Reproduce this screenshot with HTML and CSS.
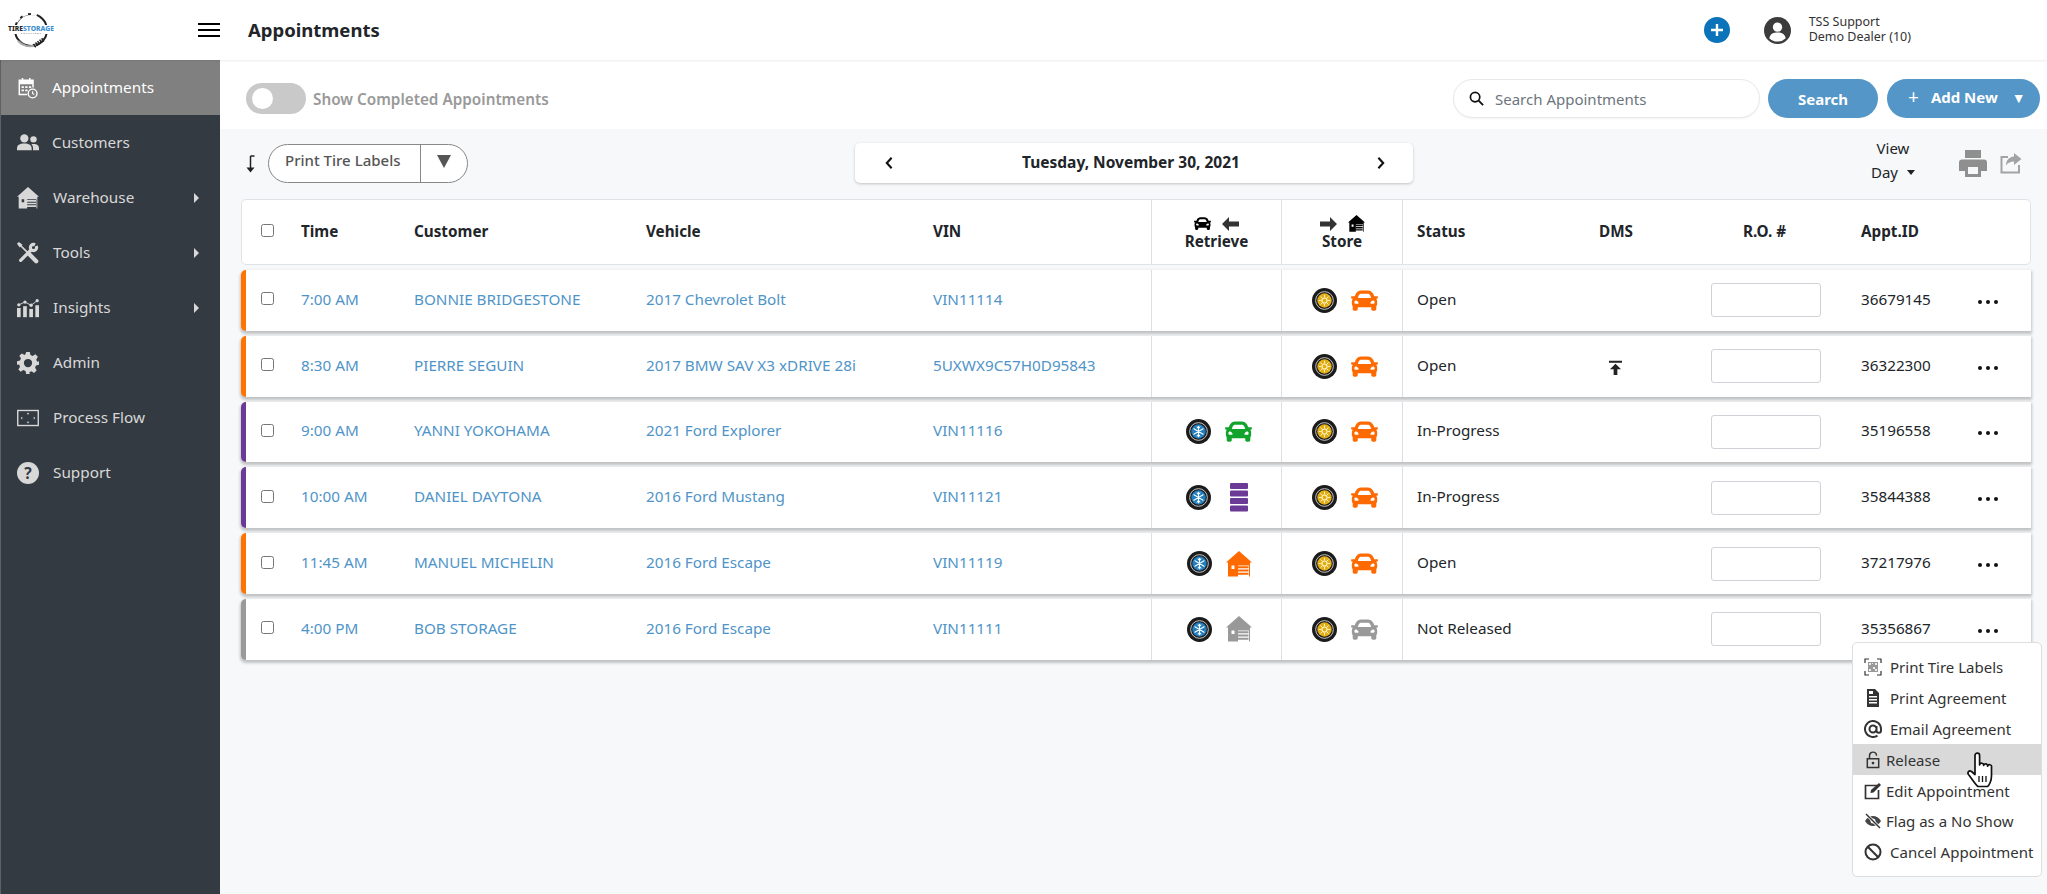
FILE: index.html
```html
<!DOCTYPE html>
<html lang="en">
<head>
<meta charset="utf-8">
<title>Appointments</title>
<link rel="stylesheet" href="styles.css">
</head>
<body>
<svg class="defs" width="0" height="0">
  <symbol id="car" viewBox="0 64 512 384"><path fill="currentColor" d="M499.99 176h-59.87l-16.64-41.6C406.38 91.63 365.57 64 319.5 64h-127c-46.06 0-86.88 27.63-103.99 70.4L71.87 176H12.01C4.2 176-1.53 183.34.37 190.91l6 24C7.7 220.25 12.5 224 18.01 224h20.07C24.65 235.73 16 252.78 16 272v48c0 16.12 6.16 30.67 16 41.93V416c0 17.67 14.33 32 32 32h32c17.67 0 32-14.33 32-32v-32h256v32c0 17.67 14.33 32 32 32h32c17.67 0 32-14.33 32-32v-54.07c9.84-11.25 16-25.8 16-41.93v-48c0-19.22-8.65-36.27-22.07-48H494c5.51 0 10.31-3.75 11.64-9.09l6-24c1.89-7.57-3.84-14.91-11.65-14.91zm-352.06-17.83c7.29-18.22 24.94-30.17 44.57-30.17h127c19.63 0 37.28 11.95 44.57 30.17L384 208H128l19.93-49.83zM96 319.8c-19.2 0-32-12.76-32-31.9S76.8 256 96 256s48 28.71 48 47.85-28.8 15.95-48 15.95zm320 0c-19.2 0-48 3.19-48-15.95S396.8 256 416 256s32 12.76 32 31.9-12.8 31.9-32 31.9z"/></symbol>
  <symbol id="house" viewBox="0 0 26 26"><path fill="currentColor" fill-rule="evenodd" d="M13 0 26 11.500H24V25.500H2V11.500H0ZM5.500 14.500v3.500h3v-3.500ZM12 14.500v11h11v-11Z"/><path fill="currentColor" d="M11.500 15.300h11v2h-11zM11.500 18.500h11v2h-11zM11.500 21.700h11v2h-11z"/></symbol>
  <symbol id="stack" viewBox="0 0 18 29"><g fill="currentColor"><rect y="0" width="18" height="6" rx="1"/><rect y="7.500" width="18" height="6" rx="1"/><rect y="15" width="18" height="6" rx="1"/><rect y="22.500" width="18" height="6" rx="1"/></g></symbol>
  <symbol id="tire-w" viewBox="0 0 26 26"><circle cx="13" cy="13" r="13" fill="#1b1b1b"/><circle cx="13" cy="13" r="9.200" fill="none" stroke="#ddd" stroke-width=".9"/><circle cx="13" cy="13" r="7.500" fill="#1f7fc0"/><path stroke="#fff" stroke-width="1.100" stroke-linecap="round" d="M13 7.500v11M8.200 10.200l9.600 5.600M8.200 15.800l9.600-5.600M11.500 8.300 13 9.800l1.500-1.500M11.500 17.700 13 16.200l1.500 1.500"/></symbol>
  <symbol id="tire-s" viewBox="0 0 26 26"><circle cx="13" cy="13" r="13" fill="#1b1b1b"/><circle cx="13" cy="13" r="9.200" fill="none" stroke="#ddd" stroke-width=".9"/><circle cx="13" cy="13" r="7.500" fill="#e2ac14"/><circle cx="13" cy="13" r="2.600" fill="none" stroke="#fff4c4" stroke-width="1.200"/><path stroke="#fff4c4" stroke-width="1" d="M13 7v2.800M13 16.200V19M7 13h2.800M16.200 13H19M8.800 8.800l2 2M15.200 15.200l2 2M17.200 8.800l-2 2M10.800 15.200l-2 2"/></symbol>
  <symbol id="lock-open" viewBox="0 0 16 20"><path fill="none" stroke="currentColor" stroke-width="1.700" d="M4 8V5a4 4 0 0 1 8 0M1.500 8.500h13v10h-13z"/><circle cx="8" cy="13.500" r="1.600" fill="currentColor"/></symbol>
</svg>

<div class="app">
  <header class="topbar">
    <div class="brand">
      <svg class="logo" viewBox="0 0 46 36" width="46" height="36">
        <circle cx="23" cy="18" r="16" fill="none" stroke="#222" stroke-width="2" />
        <path d="M8 10A16 16 0 0 1 30 3.500" fill="none" stroke="#fff" stroke-width="3" stroke-dasharray="6 3"/>
        <path d="M10 29A16 16 0 0 0 28 33" fill="none" stroke="#aaa" stroke-width="2"/>
        <path d="M26 34 36 27" fill="none" stroke="#222" stroke-width="4" stroke-dasharray="1.500 1"/>
        <rect x="0" y="13" width="46" height="9" fill="#fff"/>
        <text class="logo-a" x="0" y="18.500" textLength="46" lengthAdjust="spacingAndGlyphs">TIRE<tspan class="logo-b">STORAGE</tspan></text>
        <text class="logo-c" x="13" y="21.500" textLength="20">SOLUTIONS</text>
      </svg>
      <button class="burger" aria-label="Menu"><span></span><span></span><span></span></button>
    </div>
    <h1 class="page-title">Appointments</h1>
    <div class="top-right">
      <svg class="plus-round" viewBox="0 0 26 26" width="26" height="26"><circle cx="13" cy="13" r="13" fill="#0b73b9"/><path d="M13 7v12M7 13h12" stroke="#fff" stroke-width="2.400"/></svg>
      <svg class="avatar" viewBox="0 0 28 28" width="27" height="27"><circle cx="14" cy="14" r="14" fill="#3c3c3c"/><circle cx="14" cy="10.500" r="4.800" fill="#fff"/><path d="M5.500 22c1-5 4.500-6 8.500-6s7.500 1 8.500 6a12 12 0 0 1-17 0Z" fill="#fff"/></svg>
      <div class="user"><div>TSS Support</div><div>Demo Dealer (10)</div></div>
    </div>
  </header>

  <div class="body">
    <nav class="sidebar">
      <a class="nav-item tight active">
        <svg class="nav-icon" viewBox="0 0 22 24"><g fill="none" stroke="currentColor" stroke-width="1.600"><path d="M10 19H1.500V3.500h15v8"/><path d="M5 1v4M13 1v4"/></g><path fill="currentColor" d="M1.500 3.500h15V8h-15zM4 10h2.500v2H4zM8 10h2.500v2H8zM12 10h2.500v2H12zM4 13.500h2.500v2H4zM8 13.500h2.500v2H8z"/><circle cx="16" cy="18" r="4.800" fill="#808080" stroke="currentColor" stroke-width="1.500"/><path d="M16 15.500V18l1.800 1" fill="none" stroke="currentColor" stroke-width="1.200"/></svg>
        <span>Appointments</span>
      </a>
      <a class="nav-item tight">
        <svg class="nav-icon" viewBox="0 0 24 22"><g fill="currentColor"><circle cx="8" cy="6" r="4.500"/><circle cx="18" cy="7" r="3.500"/><path d="M0 19v-2c0-4 3-5.500 8-5.500s8 1.500 8 5.500v2ZM17.500 19v-2.500c0-1.500-.6-3-1.800-4.300 4.500-.8 8.300.4 8.300 4.300v2.500Z"/></g></svg>
        <span>Customers</span>
      </a>
      <a class="nav-item has-sub">
        <svg class="nav-icon" viewBox="0 0 26 26"><use href="#house"/></svg>
        <span>Warehouse</span><i class="caret"></i>
      </a>
      <a class="nav-item has-sub">
        <svg class="nav-icon" viewBox="0 0 24 24"><g fill="none" stroke="currentColor" stroke-linecap="round"><path stroke-width="1.800" d="M3 3l10 10"/><path stroke-width="4.600" d="M14 14l7 7"/><path stroke-width="3.600" d="M4 20 15 9"/><circle cx="18" cy="6" r="3.400" stroke-width="3.400"/></g><path class="jaw" d="M18.500 5.500 21 0h3v3Z"/><path fill="currentColor" d="M0 2 2 0l4 3-3 3Z"/></svg>
        <span>Tools</span><i class="caret"></i>
      </a>
      <a class="nav-item has-sub">
        <svg class="nav-icon" viewBox="0 0 24 22"><g fill="currentColor"><rect x="0" y="11" width="4" height="10"/><rect x="6.700" y="9" width="4" height="12"/><rect x="13.400" y="12" width="4" height="9"/><rect x="20" y="8" width="4" height="13"/><circle cx="2" cy="7.500" r="1.800"/><circle cx="8.700" cy="4.500" r="1.800"/><circle cx="15.400" cy="8" r="1.800"/><circle cx="22" cy="3" r="1.800"/></g><path d="M2 7.500 8.700 4.500l6.700 3.500L22 3" fill="none" stroke="currentColor"/></svg>
        <span>Insights</span><i class="caret"></i>
      </a>
      <a class="nav-item">
        <svg class="nav-icon" viewBox="0 0 24 24"><path fill="currentColor" fill-rule="evenodd" d="M10 0h4l.7 3.300 2.400 1 2.900-1.800 2.800 2.800-1.800 2.900 1 2.400L24 10v4l-3.300.7-1 2.400 1.800 2.900-2.800 2.800-2.900-1.800-2.400 1L14 24h-4l-.7-3.300-2.400-1L4 21.500 1.500 19l1.800-2.900-1-2.400L0 14v-4l3.300-.7 1-2.400L2.500 4 5.300 1.500l2.900 1.800 1.100-1ZM12 7.500a4.500 4.500 0 1 0 0 9 4.500 4.500 0 0 0 0-9Z"/></svg>
        <span>Admin</span>
      </a>
      <a class="nav-item">
        <svg class="nav-icon" viewBox="0 0 24 18"><rect x=".8" y=".8" width="22.400" height="16.400" fill="none" stroke="currentColor" stroke-width="1.500"/><path fill="currentColor" d="M12 3l1.500 1.800h-3zM12 15l1.500-1.800h-3zM4 9l1.800-1.500v3zM20 9l-1.800-1.500v3z"/></svg>
        <span>Process Flow</span>
      </a>
      <a class="nav-item">
        <svg class="nav-icon" viewBox="0 0 24 24"><circle cx="12" cy="12" r="12" fill="currentColor"/><text class="q-mark" x="12" y="18">?</text></svg>
        <span>Support</span>
      </a>
    </nav>

    <main class="main">
      <section class="filter-bar">
        <div class="toggle"><span class="knob"></span></div>
        <span class="toggle-label">Show Completed Appointments</span>
        <div class="search">
          <svg viewBox="0 0 16 16" width="15" height="15"><circle cx="6.500" cy="6.500" r="5" fill="none" stroke="#111" stroke-width="1.800"/><path d="M10.300 10.300 15 15" stroke="#111" stroke-width="2"/></svg>
          <span>Search Appointments</span>
        </div>
        <button class="btn btn-search">Search</button>
        <button class="btn btn-add"><span class="add-plus">+</span><span>Add New</span><span class="add-arrow">▼</span></button>
      </section>

      <section class="content">
        <div class="toolbar">
          <div class="tool-left">
            <svg class="sort" viewBox="0 0 10 18" width="10" height="18"><path d="M4.500 1h4M4.500 1v13" stroke="#222" stroke-width="1.500" fill="none"/><path d="M.5 12.500h8L4.500 17.500Z" fill="#222"/></svg>
            <div class="split">
              <span class="split-label">Print Tire Labels</span>
              <span class="split-arrow"></span>
            </div>
          </div>
          <div class="date-bar">
            <svg viewBox="0 0 10 16" width="10" height="14"><path d="M8 2 2.500 8 8 14" fill="none" stroke="#111" stroke-width="2.400"/></svg>
            <span>Tuesday, November 30, 2021</span>
            <svg viewBox="0 0 10 16" width="10" height="14"><path d="M2 2l5.500 6L2 14" fill="none" stroke="#111" stroke-width="2.400"/></svg>
          </div>
          <div class="tool-right">
            <div class="view"><div>View</div><div class="view-day">Day <i class="day-caret"></i></div></div>
            <svg class="print" viewBox="0 0 28 27" width="28" height="27"><path fill="#8f8f8f" fill-rule="evenodd" d="M6 0h16v8H6zM3 9.500h22a3 3 0 0 1 3 3V21h-6v6H6v-6H0v-8.500a3 3 0 0 1 3-3ZM9 17v7h10v-7Z"/></svg>
            <svg class="share" viewBox="0 0 22 22" width="22" height="22"><path d="M8 5H1.500v15.500H19V13" fill="none" stroke="#a3a3a3" stroke-width="2"/><path fill="#a3a3a3" d="M14 1l7.500 6-7.500 6V9.500c-3.500 0-6 1-8 4 0-5 3-8.500 8-9Z"/></svg>
          </div>
        </div>

        <div class="grid-row head">
          <div class="c c-check"><input type="checkbox" class="cb"></div>
          <div class="c">Time</div>
          <div class="c">Customer</div>
          <div class="c">Vehicle</div>
          <div class="c">VIN</div>
          <div class="c c-mid ruled"><div class="hicons"><svg width="17" height="13"><use href="#car"/></svg><svg class="harrow" viewBox="0 0 17 14" width="17" height="14"><path d="M7 0v4.500h10v5H7V14L0 7Z"/></svg></div><div>Retrieve</div></div>
          <div class="c c-mid ruled"><div class="hicons"><svg class="harrow" viewBox="0 0 17 14" width="17" height="14"><path d="M10 0v4.500H0v5h10V14l7-7Z"/></svg><svg class="hhouse" width="17" height="17"><use href="#house"/></svg></div><div>Store</div></div>
          <div class="c ruled c-status">Status</div>
          <div class="c">DMS</div>
          <div class="c c-ro">R.O. #</div>
          <div class="c">Appt.ID</div>
        </div>

        <div class="grid-row row orange">
          <div class="c c-check"><input type="checkbox" class="cb"></div>
          <div class="c link">7:00 AM</div>
          <div class="c link">BONNIE BRIDGESTONE</div>
          <div class="c link">2017 Chevrolet Bolt</div>
          <div class="c link">VIN11114</div>
          <div class="c c-mid ruled"></div>
          <div class="c c-mid ruled"><div class="pair"><svg class="tire"><use href="#tire-s"/></svg><svg class="car t-orange"><use href="#car"/></svg></div></div>
          <div class="c ruled c-status">Open</div>
          <div class="c"></div>
          <div class="c"><span class="ro-input"></span></div>
          <div class="c c-id"><span>36679145</span><span class="dots"><i></i><i></i><i></i></span></div>
        </div>

        <div class="grid-row row orange">
          <div class="c c-check"><input type="checkbox" class="cb"></div>
          <div class="c link">8:30 AM</div>
          <div class="c link">PIERRE SEGUIN</div>
          <div class="c link">2017 BMW SAV X3 xDRIVE 28i</div>
          <div class="c link">5UXWX9C57H0D95843</div>
          <div class="c c-mid ruled"></div>
          <div class="c c-mid ruled"><div class="pair"><svg class="tire"><use href="#tire-s"/></svg><svg class="car t-orange"><use href="#car"/></svg></div></div>
          <div class="c ruled c-status">Open</div>
          <div class="c"><svg class="dms" viewBox="0 0 14 16" width="13" height="15"><path d="M0 .8h14v2H0zM7 4l6 6H9v6H5v-6H1Z" fill="#222"/></svg></div>
          <div class="c"><span class="ro-input"></span></div>
          <div class="c c-id"><span>36322300</span><span class="dots"><i></i><i></i><i></i></span></div>
        </div>

        <div class="grid-row row purple">
          <div class="c c-check"><input type="checkbox" class="cb"></div>
          <div class="c link">9:00 AM</div>
          <div class="c link">YANNI YOKOHAMA</div>
          <div class="c link">2021 Ford Explorer</div>
          <div class="c link">VIN11116</div>
          <div class="c c-mid ruled"><div class="pair"><svg class="tire"><use href="#tire-w"/></svg><svg class="car t-green"><use href="#car"/></svg></div></div>
          <div class="c c-mid ruled"><div class="pair"><svg class="tire"><use href="#tire-s"/></svg><svg class="car t-orange"><use href="#car"/></svg></div></div>
          <div class="c ruled c-status">In-Progress</div>
          <div class="c"></div>
          <div class="c"><span class="ro-input"></span></div>
          <div class="c c-id"><span>35196558</span><span class="dots"><i></i><i></i><i></i></span></div>
        </div>

        <div class="grid-row row purple">
          <div class="c c-check"><input type="checkbox" class="cb"></div>
          <div class="c link">10:00 AM</div>
          <div class="c link">DANIEL DAYTONA</div>
          <div class="c link">2016 Ford Mustang</div>
          <div class="c link">VIN11121</div>
          <div class="c c-mid ruled"><div class="pair"><svg class="tire"><use href="#tire-w"/></svg><span class="slot"><svg class="stack t-purple"><use href="#stack"/></svg></span></div></div>
          <div class="c c-mid ruled"><div class="pair"><svg class="tire"><use href="#tire-s"/></svg><svg class="car t-orange"><use href="#car"/></svg></div></div>
          <div class="c ruled c-status">In-Progress</div>
          <div class="c"></div>
          <div class="c"><span class="ro-input"></span></div>
          <div class="c c-id"><span>35844388</span><span class="dots"><i></i><i></i><i></i></span></div>
        </div>

        <div class="grid-row row orange">
          <div class="c c-check"><input type="checkbox" class="cb"></div>
          <div class="c link">11:45 AM</div>
          <div class="c link">MANUEL MICHELIN</div>
          <div class="c link">2016 Ford Escape</div>
          <div class="c link">VIN11119</div>
          <div class="c c-mid ruled"><div class="pair"><svg class="tire"><use href="#tire-w"/></svg><svg class="home t-orange"><use href="#house"/></svg></div></div>
          <div class="c c-mid ruled"><div class="pair"><svg class="tire"><use href="#tire-s"/></svg><svg class="car t-orange"><use href="#car"/></svg></div></div>
          <div class="c ruled c-status">Open</div>
          <div class="c"></div>
          <div class="c"><span class="ro-input"></span></div>
          <div class="c c-id"><span>37217976</span><span class="dots"><i></i><i></i><i></i></span></div>
        </div>

        <div class="grid-row row grey">
          <div class="c c-check"><input type="checkbox" class="cb"></div>
          <div class="c link">4:00 PM</div>
          <div class="c link">BOB STORAGE</div>
          <div class="c link">2016 Ford Escape</div>
          <div class="c link">VIN11111</div>
          <div class="c c-mid ruled"><div class="pair"><svg class="tire"><use href="#tire-w"/></svg><svg class="home t-grey"><use href="#house"/></svg></div></div>
          <div class="c c-mid ruled"><div class="pair"><svg class="tire"><use href="#tire-s"/></svg><svg class="car t-grey"><use href="#car"/></svg></div></div>
          <div class="c ruled c-status">Not Released</div>
          <div class="c"></div>
          <div class="c"><span class="ro-input"></span></div>
          <div class="c c-id"><span>35356867</span><span class="dots"><i></i><i></i><i></i></span></div>
        </div>
      </section>
    </main>
  </div>

  <div class="menu">
    <div class="mi">
      <svg class="mi-ic" viewBox="0 0 18 18"><path d="M1 5V1h4M13 1h4v4M17 13v4h-4M5 17H1v-4" fill="none" stroke="#333" stroke-width="1.200"/><path d="M4 4h10v10H4z" fill="#999"/><path d="M5 5h2v2H5zM8 5h1v1H8zM11 5h2v2h-2zM5 11h2v2H5zM9 9h2v2H9zM11 11h2v2h-2z" fill="#eee"/></svg>
      <span class="ml-wide">Print Tire Labels</span>
    </div>
    <div class="mi">
      <svg class="mi-ic" viewBox="0 0 18 18"><path fill="#333" d="M3 0h8l4 4v14H3Zm2 7v1.500h8V7Zm0 3v1.500h8V10Zm0 3v1.500h8V13ZM5 2v3h4V2Z"/></svg>
      <span class="ml-wide">Print Agreement</span>
    </div>
    <div class="mi">
      <svg class="mi-ic" viewBox="0 0 18 18"><path fill="none" stroke="#333" stroke-width="2" d="M12.500 9a3.500 3.500 0 1 1-7 0 3.500 3.500 0 0 1 7 0Zm0-3v4.500a2 2 0 0 0 4.500 0V9a8 8 0 1 0-3.500 6.600"/></svg>
      <span class="ml-wide">Email Agreement</span>
    </div>
    <div class="mi hot">
      <svg class="mi-ic" viewBox="0 0 18 18"><svg x="2" y="0" width="14" height="18"><use href="#lock-open"/></svg></svg>
      <span>Release</span>
    </div>
    <div class="mi">
      <svg class="mi-ic" viewBox="0 0 18 18"><path d="M13 3.500H1.500V16.500H14.500V8" fill="none" stroke="#333" stroke-width="1.700"/><path d="M6.500 11l.5-3L15 1l2 2-7.500 7.500Z" fill="#333"/></svg>
      <span>Edit Appointment</span>
    </div>
    <div class="mi">
      <svg class="mi-ic" viewBox="0 0 18 18"><path d="M1 9c2-3.500 5-5 8-5s6 1.500 8 5c-2 3.500-5 5-8 5s-6-1.500-8-5Z" fill="#444"/><circle cx="9" cy="9" r="2.500" fill="#fff"/><path d="M2 2l14 14" stroke="#fff" stroke-width="3"/><path d="M2 2l14 14" stroke="#333" stroke-width="1.400"/></svg>
      <span>Flag as a No Show</span>
    </div>
    <div class="mi">
      <svg class="mi-ic" viewBox="0 0 18 18"><circle cx="9" cy="9" r="7.500" fill="none" stroke="#333" stroke-width="2"/><path d="M3.800 3.800l10.400 10.400" stroke="#333" stroke-width="2"/></svg>
      <span class="ml-wide">Cancel Appointment</span>
    </div>
  </div>

  <svg class="hand" viewBox="0 0 30 36" width="30" height="36"><path d="M9 3.500a2.300 2.300 0 0 1 4.600 0V13a2 2 0 0 1 4 .5 2 2 0 0 1 4 .7 2 2 0 0 1 3.900 1V24c0 5-2.500 9.500-4 10.500H12C9 32 5.500 26 2.500 22.500 1 20.500 3 18 5.500 19.500L9 22.500Z" fill="#fff" stroke="#111" stroke-width="1.700" stroke-linejoin="round"/><path d="M13 24v6M16.500 24v6M20 24v6" stroke="#111" stroke-width="1.300"/></svg>
</div>
</body>
</html>
```
FILE: styles.css
```css
* { box-sizing: border-box; }
html, body { margin: 0; height: 100%; }
body { font-family: "Noto Sans", "Open Sans", sans-serif; color: #212529; background: #fff; font-size: 15px; overflow: hidden; }
.defs { position: absolute; }
.app { position: relative; width: 2047px; height: 894px; display: flex; flex-direction: column; }

/* top bar */
.topbar { height: 60px; flex: none; display: flex; align-items: center; background: #fff; position: relative; z-index: 2; box-shadow: 0 1px 2px rgba(0,0,0,.08); }
.brand { width: 220px; height: 60px; flex: none; display: flex; align-items: center; justify-content: space-between; padding-left: 8px; }
.logo { display: block; }
.logo-a { font: 800 6.500px "Noto Sans", sans-serif; fill: #222; }
.logo-b { fill: #3f8fd0; }
.logo-c { font: 700 2.200px "Noto Sans", sans-serif; fill: #777; }
.burger { width: 22px; height: 14px; padding: 0; border: 0; background: none; display: flex; flex-direction: column; justify-content: space-between; margin-top: -1px; }
.burger span { display: block; height: 2px; background: #000; }
.page-title { margin: 0 0 2px 28px; font-size: 18.500px; font-weight: 700; color: #212529; }
.top-right { margin-left: auto; display: flex; align-items: center; padding-right: 136px; }
.plus-round { display: block; }
.avatar { display: block; margin-left: 34px; }
.user { margin: 0 0 2px 18px; font-size: 12.500px; line-height: 15px; color: #333; }

.body { flex: 1; display: flex; min-height: 0; }

/* sidebar */
.sidebar { width: 220px; flex: none; background: #343a42; border-left: 1px solid #5d6268; }
.nav-item { height: 55px; display: flex; align-items: center; color: #d8d8d8; font-size: 15.300px; position: relative; padding-left: 16px; }
.nav-item span { margin-bottom: 2px; }
.nav-item.active { background: #808080; color: #fff; }
.nav-icon { width: 22px; height: 22px; flex: none; margin-right: 14px; fill: currentColor; }
.tight .nav-icon { margin-right: 13px; }
.caret { position: absolute; left: 193px; top: 23px; border-left: 5px solid #d8d8d8; border-top: 5px solid transparent; border-bottom: 5px solid transparent; }
.q-mark { font: 700 17px "Noto Sans", sans-serif; fill: #343a42; text-anchor: middle; }
.jaw { fill: #343a42; }

/* filter */
.main { flex: 1; min-width: 0; display: flex; flex-direction: column; background: #f7f8fa; }
.filter-bar { height: 69px; flex: none; background: #fff; display: flex; align-items: center; padding: 8px 0 0 26px; }
.toggle { width: 60px; height: 31px; border-radius: 16px; background: #c9c9c9; position: relative; flex: none; }
.knob { position: absolute; left: 6px; top: 5px; width: 21px; height: 21px; border-radius: 50%; background: #fff; }
.toggle-label { margin-left: 7px; font-weight: 600; color: #999; font-size: 15.300px; }
.search { margin-left: auto; width: 307px; height: 39px; border: 1px solid #e6e8ea; border-radius: 20px; display: flex; align-items: center; padding-left: 15px; color: #6c757d; background: #fff; box-shadow: 0 1px 2px rgba(0,0,0,.05); }
.search span { margin-left: 11px; }
.btn { height: 39px; border: 0; border-radius: 20px; background: #5396c7; color: #fff; font: 700 15px "Noto Sans", sans-serif; }
.btn-search { width: 110px; margin-left: 8px; }
.btn-add { width: 153px; margin: 0 7px 0 9px; display: flex; align-items: center; padding: 0 0 3px 21px; }
.add-plus { font-size: 19px; font-weight: 400; margin-right: 12px; }
.add-arrow { font-size: 14px; margin-left: 14px; font-weight: 400; }

/* toolbar */
.content { flex: 1; padding: 0 16px 0 21px; }
.toolbar { height: 70px; display: flex; align-items: center; padding-bottom: 2px; }
.tool-left { width: 614px; flex: none; display: flex; align-items: center; padding-left: 5px; }
.sort { display: block; margin-right: 12px; margin-top: 1px; }
.split { width: 200px; height: 39px; border: 1px solid #888; border-radius: 20px; display: flex; align-items: stretch; background: #fff; }
.split-label { width: 152px; border-right: 1px solid #888; padding: 5px 0 0 16px; font-weight: 500; color: #555; font-size: 15px; }
.split-arrow { flex: 1; position: relative; }
.split-arrow::after { content: ""; position: absolute; left: 16px; top: 10px; border-top: 13px solid #555; border-left: 7px solid transparent; border-right: 7px solid transparent; }
.date-bar { width: 558px; height: 40px; flex: none; display: flex; align-items: center; justify-content: space-between; padding: 0 27px 0 29px; background: #fff; border-radius: 5px; box-shadow: 0 1px 3px rgba(0,0,0,.22); font-weight: 700; font-size: 15.500px; color: #212529; }
.date-bar span { margin: 0 8px 2px 0; }
.tool-right { flex: 1; display: flex; align-items: center; position: relative; justify-content: flex-end; }
.view { position: relative; text-align: center; margin: 0 44px 6px 0; font-size: 15px; line-height: 24px; color: #212529; }
.view-day { display: flex; align-items: center; gap: 9px; }
.day-caret { border-top: 5px solid #222; border-left: 4.500px solid transparent; border-right: 4.500px solid transparent; }
.print { display: block; }
.share { display: block; margin: 0 9px 0 13px; }

/* table */
.grid-row { display: grid; background: #fff; }
.head { grid-template-columns: 59px 113px 232px 287px 218px 130px 121px 197px 112px 150px 169px; height: 66px; border: 1px solid #dfe2e6; border-radius: 5px; font-weight: 700; }
.row { grid-template-columns: 55px 113px 232px 287px 218px 130px 121px 197px 112px 150px 170px; height: 60.800px; margin-top: 5px; border-radius: 5px 0 0 5px; box-shadow: 0 2px 3px 1px rgba(0,0,0,.22); border-left: 5px solid #ff7300; }
.row.orange { border-left-color: #ff7300; }
.row.purple { border-left-color: #6b3a96; }
.row.grey { border-left-color: #9a9a9a; }
.c { display: flex; align-items: center; font-size: 15.250px; min-width: 0; white-space: nowrap; }
.head .c { padding-bottom: 3px; }
.head .c-mid { padding-bottom: 0; }
.link, .c-status { padding-bottom: 3px; }
.c-id > span:first-child { margin-bottom: 3px; }
.head .c-check { padding: 0 0 4px 19px; }
.row .c-check { padding: 0 0 3px 15px; }
.cb { width: 13px; height: 13px; margin: 0; appearance: none; border: 1px solid #767676; border-radius: 2.500px; background: #fff; }
.link { color: #4f94c8; }
.ruled { border-left: 1px solid #dcdfe4; }
.c-mid { flex-direction: column; justify-content: center; line-height: 17px; }
.hicons { display: flex; gap: 11px; align-items: center; height: 18px; }
.hicons svg { display: block; color: #000; }
.harrow { fill: #333; }
.c-status { padding-left: 14px; }
.c-ro { padding-left: 32px; }
.c-id { justify-content: space-between; padding-right: 33px; }
.pair { display: flex; align-items: center; gap: 14px; margin-left: 5px; }
.tire { width: 25px; height: 25px; display: block; }
.car { width: 27px; height: 21px; display: block; }
.home { width: 26px; height: 26px; display: block; }
.slot { width: 27px; display: flex; justify-content: center; }
.stack { width: 18px; height: 29px; display: block; }
.t-orange { color: #ff6a00; }
.t-green { color: #12a32d; }
.t-purple { color: #6b3a96; }
.t-grey { color: #999; }
.dms { display: block; margin-left: 10px; margin-top: 2px; }
.ro-input { width: 110px; height: 34px; border: 1px solid #cfd3d8; border-radius: 3px; background: #fff; display: block; }
.dots { display: flex; gap: 4px; margin-top: 3px; }
.dots i { width: 4px; height: 4px; border-radius: 50%; background: #111; }

/* context menu */
.menu { position: absolute; left: 1852px; top: 642px; width: 190px; height: 235px; background: #fff; border: 1px solid #dedede; border-radius: 5px; padding-top: 9px; z-index: 5; font-size: 15px; color: #333; }
.mi { height: 30.800px; display: flex; align-items: center; padding-left: 11px; }
.mi.hot { background: #d9d9d9; }
.mi-ic { width: 18px; height: 18px; flex: none; margin-right: 4px; display: block; color: #333; }
.ml-wide { margin-left: 4px; }
.hand { position: absolute; left: 1966px; top: 752px; z-index: 6; }
```
